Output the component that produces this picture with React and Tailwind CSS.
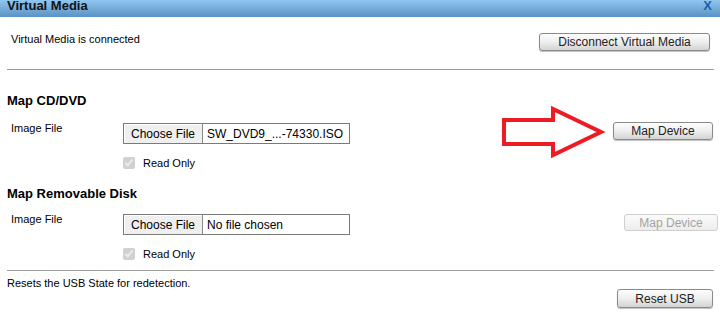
import React from "react";

const font = { fontFamily: '"Liberation Sans", Arial, sans-serif' };

function Btn({ children, className = "", disabled = false }) {
  return (
    <button
      disabled={disabled}
      className={
        "flex items-center justify-center rounded-[3px] border text-[12px] leading-none shrink-0 " +
        (disabled
          ? "border-[#cfcfcf] bg-linear-to-b from-[#fbfbfb] to-[#ededed] text-[#a3a3a3]"
          : "border-[#8a8a8a] bg-linear-to-b from-[#fdfdfd] via-[#eeeeee] to-[#d3d3d3] text-[#222] shadow-[0_1px_1px_rgba(0,0,0,0.25)]") +
        " " +
        className
      }
    >
      {children}
    </button>
  );
}

function FileBox({ name }) {
  return (
    <div className="flex h-[21px] w-[227px] items-stretch overflow-hidden border border-[#7a7a7a] bg-white text-[12px] leading-none text-black">
      <div className="flex w-[79px] shrink-0 items-center justify-center whitespace-nowrap border-r border-[#8a8a8a] bg-[#efefef] shadow-[inset_1px_1px_0_#fff]">
        Choose File
      </div>
      <div className="flex items-center whitespace-nowrap pl-[4px]">{name}</div>
    </div>
  );
}

function ReadOnly() {
  return (
    <div className="mt-[12px] flex items-center">
      <input type="checkbox" checked disabled readOnly className="m-0 h-[12px] w-[12px]" />
      <span className="ml-[8px] mt-[1px] text-[11px] leading-[13px]">Read Only</span>
    </div>
  );
}

function Arrow() {
  return (
    <svg
      className="absolute left-[-113px] top-[-17px]"
      width="106"
      height="56"
      viewBox="0 0 106 56"
    >
      <polygon
        points="4,15 53,15 53,4 101,27 53,50 53,39 4,39"
        fill="none"
        stroke="#ed1c24"
        strokeWidth="4"
        strokeLinejoin="miter"
      />
    </svg>
  );
}

export default function App() {
  return (
    <div className="h-[313px] w-[720px] overflow-hidden bg-white text-black" style={font}>
      <div className="flex h-[17px] items-start justify-between overflow-hidden bg-linear-to-b from-[#90c7ef] to-[#5c92c4] pl-[7px] pr-[8px]">
        <span className="mt-[-1px] text-[13px] font-bold leading-[13px] text-[#111]">Virtual Media</span>
        <span className="mt-[-1px] text-[13px] font-bold leading-[13px] text-[#1760b5]">X</span>
      </div>

      <div className="mt-[16px] flex items-start justify-between pl-[11px] pr-[10px]">
        <span className="text-[11px] leading-[13px]">Virtual Media is connected</span>
        <Btn className="h-[18px] w-[171px]">Disconnect Virtual Media</Btn>
      </div>

      <div className="ml-[7px] mr-[6px] mt-[18px] h-[1px] bg-[#9c9c9c]" />

      <div className="ml-[7px] mt-[23px] text-[13px] font-bold leading-[15px]">Map CD/DVD</div>
      <div className="mt-[15px] flex items-start pl-[11px] pr-[7px]">
        <span className="w-[112px] shrink-0 text-[11px] leading-[11px]">Image File</span>
        <div className="flex flex-col">
          <FileBox name="SW_DVD9_...-74330.ISO" />
          <ReadOnly />
        </div>
        <div className="relative ml-auto mt-[-1px]">
          <Arrow />
          <Btn className="h-[18px] w-[100px]">Map Device</Btn>
        </div>
      </div>

      <div className="ml-[7px] mt-[16px] text-[13px] font-bold leading-[15px]">Map Removable Disk</div>
      <div className="mt-[13px] flex items-start pl-[11px] pr-[2px]">
        <span className="w-[112px] shrink-0 text-[11px] leading-[11px]">Image File</span>
        <div className="flex flex-col">
          <FileBox name="No file chosen" />
          <ReadOnly />
        </div>
        <Btn disabled className="ml-auto h-[17px] w-[94px]">Map Device</Btn>
      </div>

      <div className="ml-[7px] mr-[6px] mt-[9px] h-[1px] bg-[#9c9c9c]" />

      <div className="ml-[7px] mt-[6px] text-[11px] leading-[13px]">Resets the USB State for redetection.</div>
      <div className="mt-[-1px] flex justify-end pr-[7px]">
        <Btn className="h-[19px] w-[96px]">Reset USB</Btn>
      </div>
    </div>
  );
}
